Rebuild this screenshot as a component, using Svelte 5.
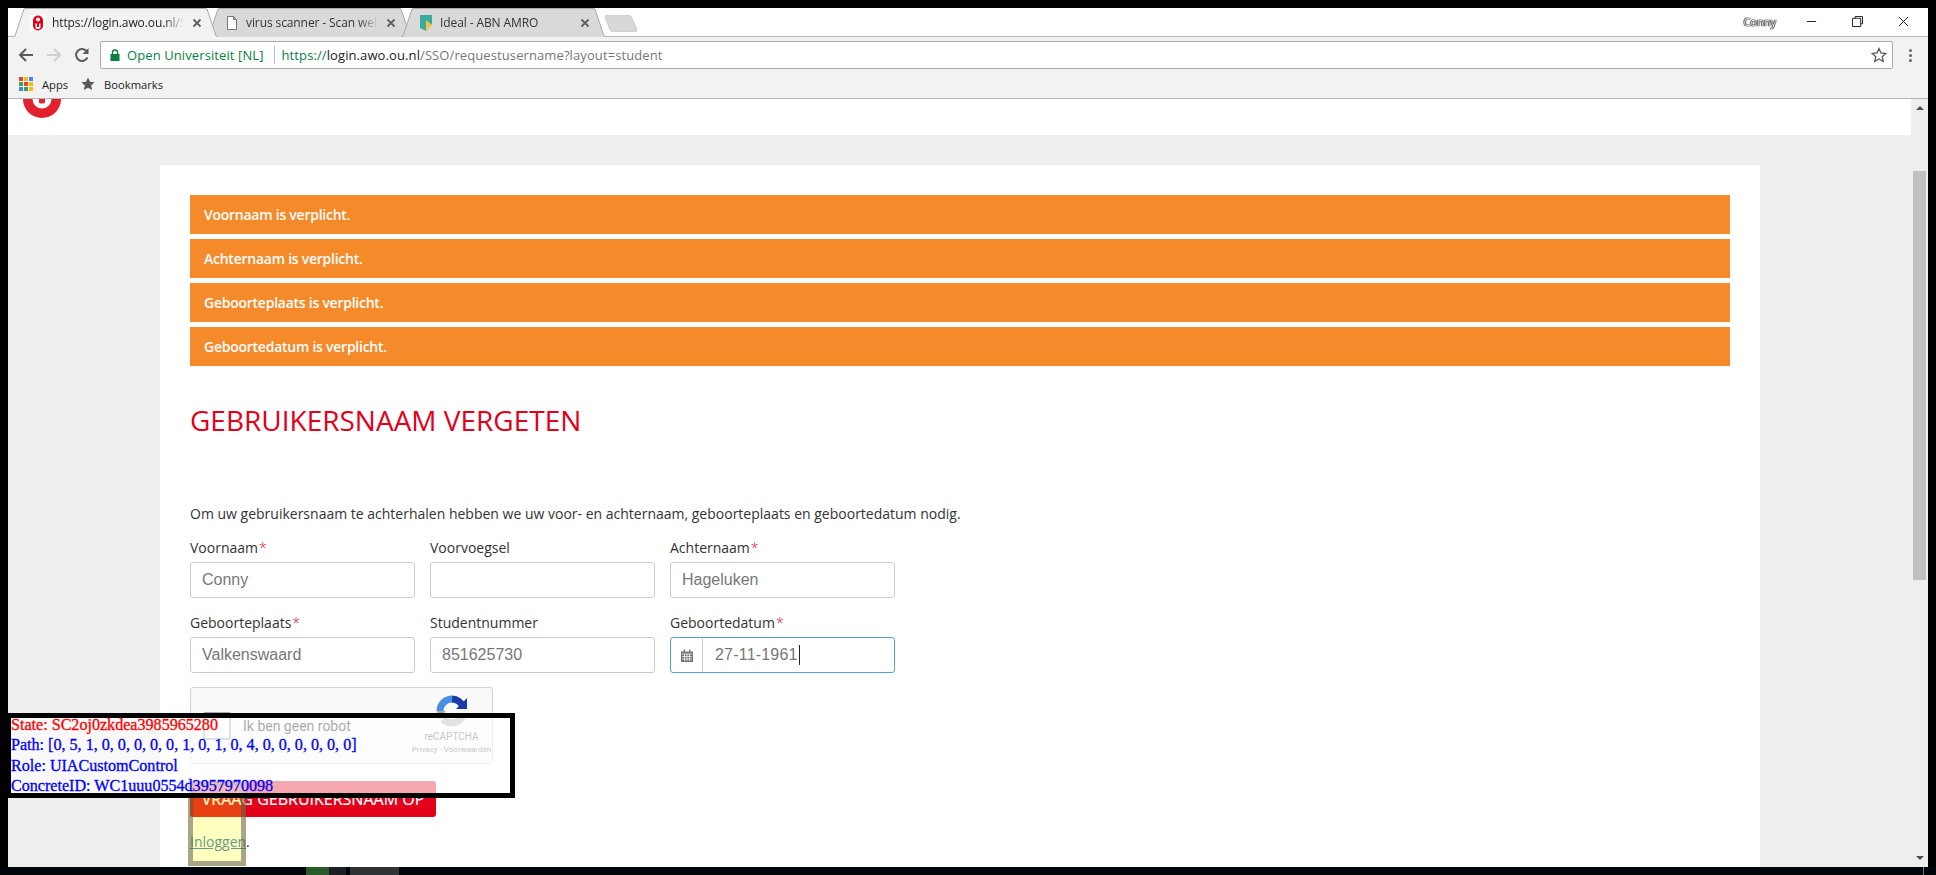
<script>
  const tabs = [
    { title: "https://login.awo.ou.nl/SSO/requestusername", icon: "ou", active: true },
    { title: "virus scanner - Scan website", icon: "doc", active: false },
    { title: "Ideal - ABN AMRO", icon: "abn", active: false }
  ];
  const alerts = ["Voornaam", "Achternaam", "Geboorteplaats", "Geboortedatum"];
  const fields = [
    { label: "Voornaam", req: true, value: "Conny" },
    { label: "Voorvoegsel", req: false, value: "" },
    { label: "Achternaam", req: true, value: "Hageluken" },
    { label: "Geboorteplaats", req: true, value: "Valkenswaard" },
    { label: "Studentnummer", req: false, value: "851625730" }
  ];
  const appColors = ["#ea4335", "#fbbc05", "#4285f4", "#34a853", "#ea4335", "#fbbc05", "#4285f4", "#34a853", "#fbbc05"];
</script>

<div class="screen">
  <div class="window">
    <div class="tabstrip">
      {#each tabs as tab}
        <div class="tab" class:active={tab.active}>
          <svg class="tabshape" viewBox="0 0 205 29" preserveAspectRatio="none">
            <path d="M0 29 L2 28 L11 1 Q11.500 0 13 0 L192 0 Q193.500 0 194 1 L203 28 L205 29 Z" class="shapefill" />
            <path d="M0 28.500 L2 28 L11 1 Q11.500 0.500 13 0.500 L192 0.500 Q193.500 0.500 194 1 L203 28 L205 28.500" class="shapeline" />
          </svg>
          {#if tab.icon === "ou"}
            <svg class="favicon" viewBox="0 0 16 16">
              <rect width="16" height="16" fill="#fff" />
              <rect x="3" y="0.500" width="10" height="15" rx="5" fill="#e2001a" />
              <circle cx="8" cy="4.500" r="2" fill="#fff" />
              <path d="M5.500 8.500h1.500v3.500h2v-3.500h1.500v4q0 1.500-2.500 1.500t-2.500-1.500z" fill="#fff" />
            </svg>
          {:else if tab.icon === "doc"}
            <svg class="favicon" viewBox="0 0 16 16">
              <path d="M3.500 1.500h6l3 3v10h-9z M9.500 1.500v3h3" fill="#fff" stroke="#777" stroke-width="1" />
            </svg>
          {:else}
            <svg class="favicon" viewBox="0 0 16 16">
              <path d="M2 0h12v9l-6 7-6-3z" fill="#3aa99f" />
              <path d="M8 5l6 5-6 6z" fill="#f5c242" />
            </svg>
          {/if}
          <span class="tabtitle">{tab.title}</span>
          <svg class="tabclose" viewBox="0 0 10 10"><path d="M1.500 1.500l7 7M8.500 1.500l-7 7" stroke="#5f5f5f" stroke-width="1.800" /></svg>
        </div>
      {/each}
      <svg class="newtab" viewBox="0 0 33 17">
        <path d="M1 1.500Q1 0 3 0H25Q26 0 27 1.500L33 14Q33 17 31 17H8Q7 17 6 15Z" fill="#d8d8d8" stroke="#ccc" />
      </svg>
      <span class="profile">Conny</span>
      <div class="winbuttons">
        <svg viewBox="0 0 12 12"><path d="M1 6h10" stroke="#111" stroke-width="1" /></svg>
        <svg viewBox="0 0 12 12"><path d="M3.500 2.500V0.500h8v8h-2 M0.500 2.500h9v9h-9z" fill="none" stroke="#111" /></svg>
        <svg viewBox="0 0 12 12"><path d="M1 1l10 10M11 1l-10 10" stroke="#111" /></svg>
      </div>
    </div>

    <div class="toolbar">
      <svg class="navicon" viewBox="0 0 16 16"><path d="M15 8H2M8 2L2 8l6 6" fill="none" stroke="#5a5a5a" stroke-width="2" /></svg>
      <svg class="navicon" viewBox="0 0 16 16"><path d="M1 8h13M8 2l6 6-6 6" fill="none" stroke="#cfcfcf" stroke-width="2" /></svg>
      <svg class="navicon" viewBox="0 0 16 16"><path d="M13.500 10.500A6 6 0 1 1 13 4.500" fill="none" stroke="#5a5a5a" stroke-width="2" /><path d="M14.500 1v6h-6z" fill="#5a5a5a" /></svg>
      <div class="omnibox">
        <svg class="lock" viewBox="0 0 10 12"><path d="M2.500 5V3.500a2.500 2.500 0 0 1 5 0V5" fill="none" stroke="#0b8043" stroke-width="1.300" /><rect x="0.500" y="5" width="9" height="7" fill="#0b8043" /></svg>
        <span class="secure">Open Universiteit [NL]</span>
        <span class="divider"></span>
        <span class="url"><span class="secure">https://</span><span class="host">login.awo.ou.nl</span>/SSO/requestusername?layout=student</span>
        <svg class="star" viewBox="0 0 16 16"><path d="M8 1.500l2 4.500 4.800.500-3.600 3.200 1 4.800L8 12l-4.200 2.500 1-4.800L1.200 6.500 6 6z" fill="none" stroke="#5a5a5a" stroke-width="1.300" /></svg>
      </div>
      <div class="dots"><i></i><i></i><i></i></div>
    </div>

    <div class="bookmarks">
      <span class="appsgrid">
        {#each appColors as c}<i style="background: {c}"></i>{/each}
      </span>
      <span class="bm">Apps</span>
      <svg class="bmstar" viewBox="0 0 16 16"><path d="M8 0.500l2.300 5 5.200.600-3.900 3.500 1.100 5.300L8 12.200l-4.700 2.700 1.100-5.300L.500 6.100l5.200-.600z" fill="#5a5a5a" /></svg>
      <span class="bm">Bookmarks</span>
    </div>

    <div class="viewport">
      <div class="page">
        <div class="siteheader">
          <svg class="logo" viewBox="0 0 38 19">
            <path d="M0 0a19 19 0 0 0 38 0h-9.500a9.500 9.500 0 0 1-19 0z" fill="#e2202e" />
            <path d="M16 0h6v3q0 1.500-3 1.500t-3-1.500z" fill="#e2202e" />
          </svg>
        </div>
        <div class="main">
          <div class="card">
            {#each alerts as a}
              <div class="alert">{a} is verplicht.</div>
            {/each}
            <h1>GEBRUIKERSNAAM VERGETEN</h1>
            <p class="intro">Om uw gebruikersnaam te achterhalen hebben we uw voor- en achternaam, geboorteplaats en geboortedatum nodig.</p>
            <div class="formgrid">
              {#each fields as f}
                <div class="field">
                  <label>{f.label}{#if f.req}<span class="req">*</span>{/if}</label>
                  <input type="text" value={f.value} readonly />
                </div>
              {/each}
              <div class="field">
                <label>Geboortedatum<span class="req">*</span></label>
                <div class="dategroup">
                  <span class="addon">
                    <svg viewBox="0 0 12 13"><path d="M0 2.500h12V13H0z M2.500 0.500h1.500v3H2.500z M8 0.500h1.500v3H8z" fill="#777" /><path d="M1 5h10M1 7.500h10M1 10h10M3.500 5v7M6 5v7M8.500 5v7" stroke="#fff" stroke-width="0.700" /></svg>
                  </span>
                  <span class="dateval">27-11-1961<span class="caret"></span></span>
                </div>
              </div>
            </div>
            <div class="recaptcha">
              <span class="rcbox"></span>
              <span class="rclabel">Ik ben geen robot</span>
              <div class="rcbrand">
                <svg viewBox="0 0 32 32">
                  <path d="M4 16A12 12 0 0 1 16 4" fill="none" stroke="#4a90e2" stroke-width="7" />
                  <path d="M16 4A12 12 0 0 1 27 12" fill="none" stroke="#1c3aa9" stroke-width="7" />
                  <path d="M31 3v11H20z" fill="#1c3aa9" />
                  <path d="M27 20A12 12 0 0 1 7 24" fill="none" stroke="#ababab" stroke-width="7" />
                  <path d="M1 16h9l-7 8z" fill="#ababab" />
                </svg>
                <span class="rcname">reCAPTCHA</span>
                <span class="rcterms">Privacy - Voorwaarden</span>
              </div>
            </div>
            <button class="submit">VRAAG GEBRUIKERSNAAM OP</button>
            <p class="loginline"><a href="#login">Inloggen</a>.</p>
          </div>
        </div>
      </div>
      <div class="scrollbar">
        <span class="arrow up"></span>
        <span class="thumb"></span>
        <span class="arrow down"></span>
      </div>
    </div>
  </div>

  <div class="taskbar">
    <i class="task green"></i><i class="task dark"></i><i class="task grey"></i>
    <span class="clock">22:11</span>
    <i class="showdesk"></i>
  </div>

  <div class="highlight"></div>
  <div class="inspect">
    <div class="state">State: SC2oj0zkdea3985965280</div>
    <div>Path: [0, 5, 1, 0, 0, 0, 0, 0, 1, 0, 1, 0, 4, 0, 0, 0, 0, 0, 0]</div>
    <div>Role: UIACustomControl</div>
    <div>ConcreteID: WC1uuu0554d3957970098</div>
  </div>
</div>

<style>
  :global(body) {
    margin: 0;
    background: #000;
  }

  .screen {
    position: relative;
    width: 1936px;
    height: 875px;
    overflow: hidden;
    background: #000;
    box-sizing: border-box;
    padding-top: 8px;
    font-family: "Open Sans", sans-serif;
  }

  .window {
    margin: 0 8px;
    height: 859px;
    display: flex;
    flex-direction: column;
    background: #fff;
  }

  /* chrome */
  .tabstrip {
    height: 28px;
    flex: none;
    display: flex;
    align-items: flex-start;
    padding-left: 5px;
    background: #fff;
    position: relative;
    z-index: 1;
  }

  .tab {
    position: relative;
    width: 205px;
    height: 29px;
    margin-right: -11px;
    display: flex;
    align-items: center;
    padding: 0 16px 0 17px;
    box-sizing: border-box;
    font-size: 12px;
    letter-spacing: -0.1px;
    color: #333;
  }

  .tabshape {
    position: absolute;
    left: 0;
    top: 0;
    width: 100%;
    height: 100%;
  }

  .shapefill {
    fill: #d9d9d9;
  }

  .shapeline {
    fill: none;
    stroke: #aaa;
  }

  .tab.active {
    z-index: 2;
    color: #222;
  }

  .tab.active .shapefill {
    fill: #f2f2f2;
  }

  .favicon {
    position: relative;
    width: 16px;
    height: 16px;
    flex: none;
    margin-right: 6px;
  }

  .tabtitle {
    position: relative;
    flex: 1;
    overflow: hidden;
    white-space: nowrap;
    -webkit-mask-image: linear-gradient(to right, #000 85%, transparent 100%);
    mask-image: linear-gradient(to right, #000 85%, transparent 100%);
  }

  .tabclose {
    position: relative;
    width: 10px;
    height: 10px;
    flex: none;
    margin-left: 8px;
  }

  .newtab {
    width: 33px;
    height: 17px;
    margin: 7px 0 0 9px;
    flex: none;
  }

  .profile {
    margin-left: auto;
    margin-top: 6px;
    font-size: 11px;
    color: #fff;
    text-shadow: 0 0 1px #000, 0 0 1px #000, 0 0 1px #000, 0 0 1px #000;
  }

  .winbuttons {
    display: flex;
    gap: 35px;
    margin: 8px 19px 0 30px;
  }

  .winbuttons svg {
    width: 11px;
    height: 11px;
  }

  .toolbar {
    height: 34px;
    flex: none;
    display: flex;
    align-items: center;
    background: #f2f2f2;
    border-top: 1px solid #b4b4b4;
    box-sizing: border-box;
    padding: 3px 0 0 10px;
    gap: 12px;
  }

  .navicon {
    width: 16px;
    height: 16px;
    flex: none;
  }

  .omnibox {
    flex: 1;
    height: 28px;
    margin-left: -2px;
    display: flex;
    align-items: center;
    background: #fff;
    border: 1px solid #aaa;
    border-radius: 2px;
    box-sizing: border-box;
    padding: 0 5px 0 9px;
    font-size: 13px;
    letter-spacing: 0.1px;
    color: #777;
    white-space: nowrap;
  }

  .lock {
    width: 10px;
    height: 12px;
    margin-right: 7px;
  }

  .secure {
    color: #0b8043;
  }

  .divider {
    width: 1px;
    height: 18px;
    background: #bbb;
    margin: 0 7px 0 10px;
  }

  .host {
    color: #222;
  }

  .star {
    width: 16px;
    height: 16px;
    margin-left: auto;
  }

  .dots {
    width: 36px;
    flex: none;
    margin-left: -13px;
    display: flex;
    flex-direction: column;
    align-items: center;
    gap: 2px;
  }

  .dots i {
    width: 3px;
    height: 3px;
    border-radius: 50%;
    background: #666;
  }

  .bookmarks {
    height: 29px;
    flex: none;
    display: flex;
    align-items: center;
    background: #f2f2f2;
    border-bottom: 1px solid #b4b4b4;
    box-sizing: border-box;
    padding-left: 11px;
    font-size: 11.200px;
    color: #222;
  }

  .appsgrid {
    display: grid;
    grid-template-columns: repeat(3, 4px);
    grid-auto-rows: 4px;
    gap: 1px;
    margin-right: 9px;
  }

  .bm {
    white-space: nowrap;
  }

  .bmstar {
    width: 14px;
    height: 14px;
    margin: 0 9px 0 13px;
  }

  /* page */
  .viewport {
    flex: 1;
    min-height: 0;
    display: flex;
  }

  .page {
    flex: 1;
    min-width: 0;
    display: flex;
    flex-direction: column;
    background: #eee;
    overflow: hidden;
  }

  .siteheader {
    height: 36px;
    flex: none;
    background: #fff;
    padding-left: 15px;
  }

  .logo {
    display: block;
    width: 38px;
    height: 19px;
  }

  .main {
    flex: 1;
    padding: 30px 151px 0 152px;
    min-height: 0;
  }

  .card {
    background: #fff;
    height: 100%;
    padding: 30px;
    box-sizing: border-box;
    color: #333;
    font-size: 14px;
  }

  .alert {
    height: 39px;
    line-height: 39px;
    margin-bottom: 5px;
    padding-left: 14px;
    background: #f58a2a;
    color: #fff;
    font-weight: 600;
    font-size: 14px;
    letter-spacing: -0.25px;
  }

  h1 {
    margin: 34px 0 0;
    font-size: 28px;
    line-height: 40px;
    font-weight: 400;
    color: #e2001a;
  }

  .intro {
    margin: 64px 0 0;
    line-height: 20px;
    font-size: 14px;
  }

  .formgrid {
    display: grid;
    grid-template-columns: repeat(3, 225px);
    column-gap: 15px;
    row-gap: 15px;
    margin-top: 14px;
  }

  .field {
    display: flex;
    flex-direction: column;
  }

  label {
    height: 24px;
    line-height: 20px;
    font-size: 14px;
    color: #333;
  }

  .req {
    color: #e2001a;
    margin-left: 1px;
    font-weight: 300;
  }

  input {
    height: 36px;
    width: 100%;
    box-sizing: border-box;
    border: 1px solid #ccc;
    border-radius: 3px;
    padding: 0 12px 0 11px;
    font-family: "Liberation Sans", Arial, sans-serif;
    font-size: 16px;
    color: #777;
    background: #fff;
    outline: none;
  }

  .dategroup {
    height: 36px;
    display: flex;
    box-sizing: border-box;
    border: 1px solid #5b9dd9;
    border-radius: 3px;
    font-family: "Liberation Sans", Arial, sans-serif;
    font-size: 16px;
    color: #777;
    align-items: stretch;
  }

  .addon {
    width: 32px;
    flex: none;
    box-sizing: border-box;
    border-right: 1px solid #ccc;
    display: flex;
    align-items: center;
    justify-content: center;
  }

  .addon svg {
    width: 12px;
    height: 13px;
  }

  .dateval {
    display: flex;
    align-items: center;
    padding-left: 12px;
    letter-spacing: 0.2px;
  }

  .caret {
    width: 1px;
    height: 20px;
    background: #222;
    margin-left: 1px;
  }

  .recaptcha {
    position: relative;
    width: 301px;
    height: 75px;
    margin-top: 14px;
    display: flex;
    align-items: center;
    background: #f9f9f9;
    border: 1px solid #d3d3d3;
    border-radius: 3px;
    font-family: Roboto, sans-serif;
  }

  .rcbox {
    width: 24px;
    height: 24px;
    margin-left: 12px;
    background: #fff;
    border: 2px solid #a8a8a8;
    border-radius: 2px;
  }

  .rclabel {
    margin-left: 12px;
    font-size: 14px;
    color: #000;
  }

  .rcbrand {
    margin-left: auto;
    width: 81px;
    display: flex;
    flex-direction: column;
    align-items: center;
    color: #555;
  }

  .rcbrand svg {
    width: 32px;
    height: 32px;
  }

  .rcname {
    font-size: 10px;
    line-height: 14px;
    margin-top: 3px;
  }

  .rcterms {
    font-size: 8px;
    line-height: 12px;
    white-space: nowrap;
  }

  .submit {
    display: block;
    margin-top: 17px;
    width: 246px;
    height: 36px;
    border: 0;
    border-radius: 3px;
    background: #e2001a;
    color: #fff;
    font-family: "Open Sans", sans-serif;
    font-size: 16px;
    -webkit-text-stroke: 0.2px;
    padding: 0;
  }

  .loginline {
    margin: 15px 0 0;
    line-height: 20px;
    font-size: 14px;
  }

  .loginline a {
    color: #337ab7;
  }

  .scrollbar {
    width: 17px;
    flex: none;
    background: #eee;
    display: flex;
    flex-direction: column;
    align-items: center;
    position: relative;
  }

  .thumb {
    width: 13px;
    height: 409px;
    background: #c0c0c0;
    margin-top: 61px;
  }

  .arrow {
    width: 0;
    height: 0;
    border-left: 4px solid transparent;
    border-right: 4px solid transparent;
  }

  .arrow.up {
    border-bottom: 4px solid #505050;
    margin-top: 7px;
  }

  .arrow.down {
    border-top: 4px solid #505050;
    margin-top: auto;
    margin-bottom: 7px;
  }

  /* taskbar sliver */
  .taskbar {
    height: 8px;
    display: flex;
    background: #00060c;
    position: relative;
    overflow: hidden;
  }

  .task {
    display: block;
    height: 8px;
    flex: none;
  }

  .task.green {
    margin-left: 306px;
    width: 23px;
    background: #2a5a2a;
  }

  .task.dark {
    width: 17px;
    background: #1c2024;
  }

  .task.grey {
    width: 49px;
    margin-left: 4px;
    background: #2f3336;
  }

  .clock {
    position: absolute;
    left: 1826px;
    top: 5px;
    font-size: 12px;
    line-height: 16px;
    color: #fff;
  }

  .showdesk {
    position: absolute;
    left: 1923px;
    top: 0;
    width: 1px;
    height: 8px;
    background: #777;
  }

  /* test tool overlays */
  .highlight {
    position: absolute;
    left: 188px;
    top: 781px;
    width: 58px;
    height: 85px;
    box-sizing: border-box;
    border: 5px solid rgba(80, 80, 80, 0.5);
    background: rgba(255, 255, 0, 0.25);
  }

  .inspect {
    position: absolute;
    left: 6px;
    top: 713px;
    width: 509px;
    height: 85px;
    box-sizing: border-box;
    border: 5px solid #000;
    background: rgba(255, 255, 255, 0.66);
    font-family: "Liberation Serif", serif;
    font-size: 16.100px;
    line-height: 20.300px;
    color: #00f;
    white-space: nowrap;
    -webkit-text-stroke: 0.3px;
  }

  .state {
    color: #f00;
    margin-top: -3px;
  }
</style>
